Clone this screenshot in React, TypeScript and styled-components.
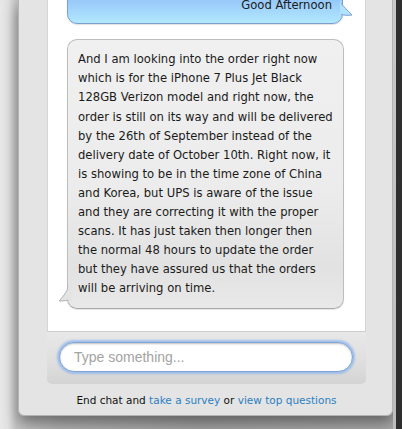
import React from "react";
import styled, { createGlobalStyle } from "styled-components";

const GlobalStyle = createGlobalStyle`
  html, body { margin: 0; padding: 0; }
  body { background: #b9b9b9; overflow: hidden; }
  * { box-sizing: border-box; }
`;

const Page = styled.div`
  width: 402px;
  height: 429px;
  overflow: hidden;
  display: flex;
  background: linear-gradient(to right, #e8e8e8 0px, #e0e0e0 8px, #c4c4c4 16px, #b0b0b0 60px, #a2a2a2 200px, #a8a8a8 393px);
`;

const Dialog = styled.div`
  margin-left: 18px;
  width: 375px;
  height: 416px;
  flex: 0 0 375px;
  display: flex;
  flex-direction: column;
  background: #e4e4e4;
  border-radius: 0 0 6px 6px;
  border: 1px solid #b4b4b4;
  border-top: none;
  box-shadow: 0 7px 14px rgba(0, 0, 0, 0.4);
  padding: 0 26px 0 28px;
`;

const ChatArea = styled.div`
  flex: 0 0 332px;
  background: #ffffff;
  border-left: 1px solid #d6d6d6;
  border-right: 1px solid #d6d6d6;
  border-bottom: 1px solid #cdcdcd;
  overflow: hidden;
  display: flex;
  flex-direction: column;
  justify-content: flex-end;
  gap: 15px;
  padding: 0 21px 22px 19px;
`;

const Bubble = styled.div<{ $variant: "blue" | "gray" }>`
  position: relative;
  flex: 0 0 auto;
  font-family: "DejaVu Sans", Verdana, sans-serif;
  font-size: 11.6px;
  line-height: 19.05px;
  color: #1a1a1a;
  white-space: pre;
  border-radius: 10px;
  ${(p) =>
    p.$variant === "blue"
      ? `
    margin-right: 1px;
    text-align: right;
    line-height: 11px;
    padding: 30px 10px 12px 11px;
    background: linear-gradient(to bottom, #7fb2f6 0%, #8dbdf8 40%, #a3d6fc 75%, #b2e8fe 100%);
    border: 1px solid #7d9fd0;
    box-shadow: 0 1px 1px rgba(0,0,0,0.12);
  `
      : `
    text-align: left;
    padding: 10px 8px 10px 10px;
    background: linear-gradient(to bottom, #f0f0f0 0%, #ececec 55%, #e2e2e2 85%, #e9e9e9 100%);
    border: 1px solid #bdbdbd;
    border-bottom-color: #a9a9a9;
    box-shadow: 0 1px 1px rgba(0,0,0,0.1);
  `}
`;

const Tail = styled.svg<{ $side: "left" | "right" }>`
  position: absolute;
  width: 14px;
  height: 22px;
  ${(p) =>
    p.$side === "right"
      ? `right: -12px; bottom: 5px;`
      : `left: -10px; bottom: 4px;`}
`;

const InputBar = styled.div`
  flex: 0 0 52px;
  background: linear-gradient(to bottom, #e8e8e8 0%, #dedede 60%, #d4d4d4 100%);
  border-radius: 0 0 5px 5px;
  padding: 10px 13px 11px 12px;
  display: flex;
`;

const Input = styled.input`
  flex: 1;
  height: 30px;
  border-radius: 15px;
  border: 1px solid #7ea6d8;
  background: #ffffff;
  box-shadow: 0 0 2px 2px rgba(120, 170, 240, 0.6), inset 0 1px 2px rgba(0, 0, 0, 0.25);
  padding: 0 14px;
  font-family: "Liberation Sans", Arial, sans-serif;
  font-size: 14px;
  color: #333;
  outline: none;
  &::placeholder {
    color: #a3a3a3;
  }
`;

const Footer = styled.div`
  flex: 1;
  display: flex;
  align-items: center;
  justify-content: center;
  padding-top: 1px;
  font-family: "DejaVu Sans", Verdana, sans-serif;
  font-size: 10.5px;
  color: #111;
  white-space: pre;
`;

const Link = styled.a`
  color: #2b7fc2;
  text-decoration: none;
`;

const RightEdge = styled.div`
  flex: 1;
  display: flex;
`;

const EdgeLight = styled.div`
  flex: 0 0 3px;
  background: linear-gradient(to bottom, #c9c9c9 0%, #bdbdbd 100%);
`;

const EdgeDark = styled.div`
  flex: 1;
  background: #2e2e2e;
`;

const grayText = `And I am looking into the order right now
which is for the iPhone 7 Plus Jet Black
128GB Verizon model and right now, the
order is still on its way and will be delivered
by the 26th of September instead of the
delivery date of October 10th. Right now, it
is showing to be in the time zone of China
and Korea, but UPS is aware of the issue
and they are correcting it with the proper
scans. It has just taken then longer then
the normal 48 hours to update the order
but they have assured us that the orders
will be arriving on time.`;

export default function App() {
  return (
    <>
      <GlobalStyle />
      <Page>
        <Dialog>
          <ChatArea>
            <Bubble $variant="blue">
              Good Afternoon
              <Tail $side="right" viewBox="0 0 14 22">
                <path
                  d="M0 6 C 3 10, 7 14, 12 19 C 8 19.5, 4 19.5, 0 18 Z"
                  fill="#b0e4fe"
                  stroke="#7d9fd0"
                  strokeWidth="1"
                />
                <rect x="-1" y="5" width="2.2" height="14" fill="#aee2fe" />
              </Tail>
            </Bubble>
            <Bubble $variant="gray">
              {grayText}
              <Tail $side="left" viewBox="0 0 14 22">
                <path
                  d="M11 2 C 10 8, 6 14, 1 19 C 6 19, 10 18.5, 14 17 Z"
                  fill="#e4e4e4"
                  stroke="#b0b0b0"
                  strokeWidth="1"
                />
                <rect x="10.2" y="1.5" width="4" height="17" fill="#e4e4e4" />
              </Tail>
            </Bubble>
          </ChatArea>
          <InputBar>
            <Input placeholder="Type something..." />
          </InputBar>
          <Footer>
            {"End chat and "}
            <Link href="#">take a survey</Link>
            {" or "}
            <Link href="#">view top questions</Link>
          </Footer>
        </Dialog>
        <RightEdge>
          <EdgeLight />
          <EdgeDark />
        </RightEdge>
      </Page>
    </>
  );
}
